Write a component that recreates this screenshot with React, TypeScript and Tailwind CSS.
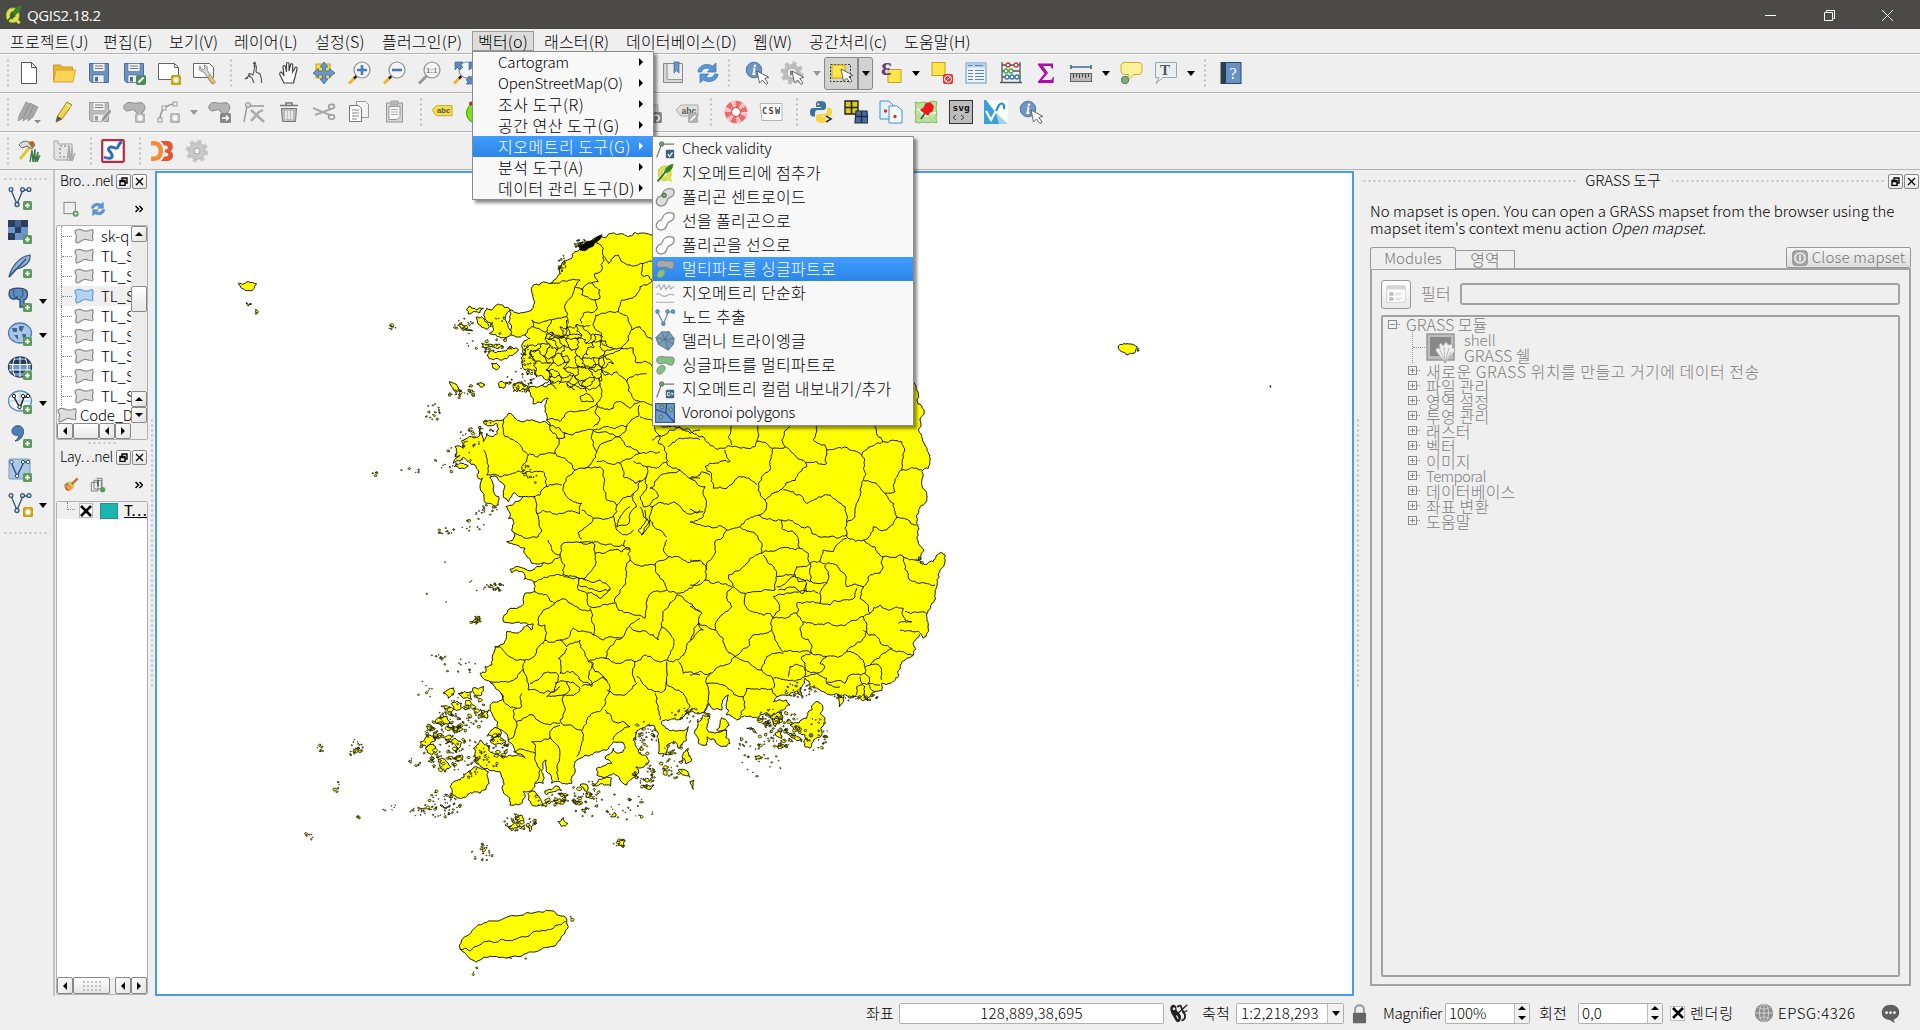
import React from "react";

type Pt = [number, number];
type Kids = { children?: React.ReactNode };

/* ---------- map geometry ---------- */
let seed = 7;
const rnd = () => {
  seed = (seed * 1103515245 + 12345) & 0x7fffffff;
  return seed / 0x7fffffff;
};
// Tiles are digitised at three units per screen pixel, relative to a tile origin.
const A: Pt = [400, 220];
const B: Pt = [400, 540];
const C: Pt = [690, 420];
const J: Pt = [440, 860];
const pts = (o: Pt, s: string): Pt[] =>
  s.trim().split(/\s+/).map((p) => {
    const [x, y] = p.split(",").map(Number);
    return [o[0] + x / 3, o[1] + y / 3] as Pt;
  });
const rough = (p: Pt[], amp: number): Pt[] => {
  const split = (a: Pt, b: Pt, out: Pt[]) => {
    const dx = b[0] - a[0];
    const dy = b[1] - a[1];
    const len = Math.hypot(dx, dy);
    if (len < 2.6) {
      out.push(b);
      return;
    }
    const k = (rnd() - 0.5) * amp;
    const m: Pt = [(a[0] + b[0]) / 2 - dy * k, (a[1] + b[1]) / 2 + dx * k];
    split(a, m, out);
    split(m, b, out);
  };
  const out: Pt[] = [p[0]];
  for (let i = 1; i < p.length; i++) split(p[i - 1], p[i], out);
  return out;
};
const d = (p: Pt[], close = false) =>
  "M" + p.map((q) => q[0].toFixed(1) + " " + q[1].toFixed(1)).join("L") + (close ? "Z" : "");

const coast: Pt[] = [
  ...pts(A, "757,45 725,40 690,47 660,42 640,38 600,50 575,62 545,85 525,95 515,115 490,125 475,145 480,160 462,180 450,190 430,185 400,195 395,215 400,235 395,270 370,278 330,270 335,345 345,348 375,345 390,355 365,375 370,400 365,430 375,450 405,450 405,465 440,480 460,485 440,500 390,500 385,512 400,535 400,552 445,535 435,575 440,600 450,610 450,630 470,655 495,652 495,638 480,625 440,608 380,600 345,595 325,580 310,600 280,605 250,605 270,617 290,610 295,625 280,650 260,640 250,665 240,640 240,618 235,650 215,650 190,660 190,685 165,680 165,710 180,705 160,730 190,712 205,725 225,735 235,775 248,775 250,820 262,850 295,855 280,810 270,770 285,768 300,785 315,800 315,835 325,845 345,818 370,830 345,845 318,860 330,880 325,895 340,900 335,930 345,948"),
  ...pts(B, "320,5 350,15 375,25 380,50 395,70 430,68 425,78 370,85 330,88 335,98 370,97 372,118 400,125 405,155 375,160 370,185 345,205 310,230 310,245 340,250 400,252 395,270 385,258 370,262 365,272 320,275 300,315 285,320 278,345 275,375 255,380 258,395 240,400 250,415 270,425 300,455 310,470 275,490 270,510 280,530 290,565 325,605 345,635 375,655 330,645 310,655 280,640 262,615 240,600 220,625 225,665 250,685 300,695 310,720 310,755 325,770 330,795 365,790 370,755 400,745 405,730 430,730 438,660 445,700 455,730 480,725 515,730 525,690 530,660 555,645 600,635 640,605 670,608 675,625 655,640 640,625 632,640 615,655 635,670 590,685 590,705 640,700 660,720 680,735 715,700 710,680 748,665 740,650 715,635 700,600 710,575 760,555 775,580 775,640 800,645 800,615 830,610 835,625 860,600 865,560 820,570 785,545 800,540 830,540 860,515 895,522"),
  ...pts(C, "25,882 55,850 65,865 80,865 95,870 98,840 115,825 110,885 140,900 205,895 225,880 260,885 275,870 300,855 290,840 250,845 260,830 300,820 340,830 335,800 345,775 360,800 390,810 420,825 440,820 448,860 460,825 480,835 510,835 520,842 540,830 555,815 575,812 575,790 600,790 625,770 630,735 645,720 670,705 672,665 680,655 692,640 700,655 710,640 715,615 710,600 712,580 725,550 735,520 742,490 750,450 765,425 765,405 755,397 730,425 710,433 685,418 702,390 685,370 685,345 680,310 680,285 700,255 708,215 695,180 695,155 715,145 720,105 705,75 695,50 690,0 702,-20 680,-60"),
  [880, 330], [850, 280], [800, 250], [700, 240],
];

const bordersA = `600,50 590,70 610,85 612,120 605,150 585,160 595,185 565,190 545,210 525,200 540,180 500,185 470,190 450,190
612,110 625,130 655,105 665,125 690,135 725,130 757,125
725,130 725,165 757,180
757,180 720,200 690,235 665,240 655,275 685,295 695,330 685,360 665,385
525,200 515,230 500,245 500,290
395,300 430,305 470,295 500,290 505,310
575,190 600,210 600,235 580,240 545,225 545,205
585,240 590,270 550,280 540,300 545,310
585,285 620,278 655,275
500,300 485,355 440,335 400,320 395,300
400,320 375,345
440,335 455,300
695,330 720,320 740,350 757,360
590,285 580,310 605,340 610,375 665,385 700,385 705,425 730,425 757,440
665,385 640,400 610,405 605,450 635,465 650,455 680,485 740,460
680,485 685,510 700,535 720,545 757,555
605,465 600,500 605,530 590,550 585,575 600,600 580,620
590,560 640,565 650,545 690,565 720,545
450,490 500,485 540,505 570,510 600,490
540,530 560,520 580,545 545,545 540,530
440,600 480,605 505,575 560,570 590,550
495,640 540,635 580,630 640,625 680,620
720,555 715,590 680,620 655,650
580,630 580,680 590,695 550,745 525,750 500,720 465,700 475,655
655,650 620,665 590,695
580,630 655,650 680,680 720,700 780,695
720,590 757,600 780,650 775,670 800,700 805,725
310,600 315,650 355,670 385,705 440,700 465,700
250,690 262,730 260,765 305,770
385,705 365,740 370,755 305,770
365,760 430,755 440,800 485,795
525,750 490,795 500,830 545,850 540,880 470,885 430,870 410,880 400,830
370,830 400,830 420,825 440,800
550,745 600,740 610,750 610,800 620,840 650,855 690,830 700,820 720,780
590,725 660,730 700,710 720,700
660,730 670,770 705,790 740,765 740,740 700,725
740,770 720,830 730,860 750,855 775,830 750,805 770,780 800,760 840,750 800,725 740,740
545,870 580,895 640,890 650,855
580,895 535,940 545,957
690,860 655,900 650,920 680,915 690,880 710,860 700,820
720,860 740,900 715,930 725,945 745,910 735,870
750,860 820,845 860,880 900,870
750,900 780,930 800,950
805,680 860,655 900,660
840,750 870,775 900,775
640,890 650,930 680,945 700,930
410,880 425,930 415,950 345,940
757,600 800,620 870,640 900,630
757,860 750,900 725,945`;
const bordersB = `445,0 455,30 480,45 485,15 540,8 585,15 585,45 580,85 555,115 490,105 495,75 480,45
480,50 430,68
540,5 600,10 665,15 690,25 690,60
585,40 640,30 690,25
675,0 672,18
690,60 680,110 660,150 645,175 655,210 690,220 735,235
800,0 790,30 805,50 765,75 735,75 690,60
805,50 850,60 900,60
765,75 770,100 795,130 800,150 830,160 900,120
490,105 400,125
490,110 540,115 535,150 560,160 570,200 600,200 645,190
545,115 600,120 630,150 600,175 590,165 560,160
535,135 565,145 600,155 630,150
405,155 440,165 465,190 430,210 415,235 415,255 435,255 435,300
465,190 500,180 530,200 570,210
570,205 575,245 580,285 610,300 670,290 680,270 690,255 720,235
435,300 480,300 510,285 520,265 580,285
735,235 740,205 760,155 800,150
830,165 805,200 785,260 775,300 740,275 690,260
830,165 900,215
785,260 815,290 820,320 800,360 735,345 705,365 615,355 670,290
800,360 835,360 860,325 875,290 900,250
835,365 850,400 900,405
480,300 500,320 540,300 555,340 565,365 615,355
500,325 475,355 480,400 520,395 540,420 575,440 565,410 580,370 565,365
435,300 430,310 375,360 345,360 300,320 285,320
375,360 370,390 350,415 270,425
370,390 385,430 385,450 430,460 465,455
390,430 430,400 470,400 475,420 465,455
465,430 500,425 540,445 530,460 490,465 440,470 480,440
500,425 510,450 490,465
545,440 570,435 610,410 620,420 615,480 605,510 575,520 560,550 545,570 490,555 480,540 490,490 490,465
575,370 585,395 620,420
705,365 700,410 710,430 675,465 620,450
800,365 800,420 795,450 765,455 710,410
800,425 850,460 870,500 855,525
765,460 775,500 780,540
365,460 365,500 340,510 350,550 325,600
305,460 315,490 350,505
350,545 400,525 420,545 480,550
480,555 450,575 450,595 395,605 405,640 340,635
405,640 405,730
450,590 480,640 475,720
545,570 545,610 530,650
615,510 640,545 690,560 640,600`;
const bordersC = `-114,60 -60,30 0,30 40,50 95,85 140,80 195,80 200,65 250,85 285,80 275,60 300,20
125,10 115,50 125,75
200,10 200,65
105,90 120,125 60,130 45,140 65,160 70,205 110,205 145,170 200,195
250,85 240,150 215,180 205,210 225,240 270,210 350,140 345,125 310,100 285,80
385,10 370,60 405,75 410,130 345,130
410,90 480,90 515,105 580,65 555,20 550,0
515,105 520,180 505,240 495,290 470,305 465,260 420,225 350,250 310,215 280,210
580,65 635,65 640,110 635,150 695,150
635,150 615,180 615,215 585,220 520,180
585,220 620,290 680,315
620,290 590,330 550,320 520,360 475,355 470,345
470,305 465,325 470,345 420,350 365,340 355,320 275,300 205,285 150,320
225,240 230,260 205,285
0,175 45,200 40,290 0,305
0,175 35,155 60,165
0,268 40,275
0,305 60,320 110,330 150,320 180,335 215,370 215,400
110,330 80,360 75,400 50,430 45,480 125,500
0,420 35,425 50,450
0,495 45,480
215,400 180,415 160,440 115,465 130,500
220,405 235,430 260,460 255,510 200,515 165,520 130,500
275,300 275,325 325,360 330,385 215,400
330,385 355,400 360,430 320,440 315,465 260,470
360,430 390,425 400,390 430,395 470,355
520,360 580,410 570,460 535,470 520,500 470,500 455,455 390,425
580,410 635,405 685,420
640,410 660,480 690,490 735,495
520,500 510,535 540,580
360,430 360,480 410,490 405,435
260,500 300,475 350,490 340,520 300,500 265,510
315,465 325,485 350,480 365,485
410,490 390,520 390,550 420,555 495,530 500,505
350,515 385,520
350,490 350,515 300,520 250,530 270,570 250,590 245,630 190,645 175,680 135,710
165,520 175,570 240,580 250,595
130,500 110,520 125,560 90,590 75,630 105,680 135,710
0,560 35,580 25,610 75,630
0,660 40,630 25,610
250,595 320,580 340,610 335,650 365,675 365,700 280,695 255,660 245,630
320,580 320,550 350,545 390,550
340,605 420,610 520,590 540,580 570,555 640,565 645,600
645,575 710,580
520,590 530,630 470,695 410,710 365,700
520,630 560,650 605,685 640,695 670,705
470,695 525,740 580,700 605,685
135,710 60,760 0,765
60,760 50,790 110,800 160,830 170,805 245,805
135,710 190,740 215,750 245,770 250,805
215,750 230,710 280,700
250,775 320,780 345,770 340,740 300,740 295,770
365,700 335,710 345,750 380,760 405,740 390,730 410,710
345,770 380,760 410,775 410,790 465,790 480,765 525,760 525,740
410,790 450,800
525,760 540,800 555,815
540,735 570,740 575,780
495,830 500,800 540,790 570,795
510,770 525,800 520,835
625,610 665,605
630,632 690,638
645,600 665,605
50,790 55,830 40,880
160,830 150,890
245,805 260,830`;
const isles: [Pt, string][] = [
  [A, "260,265 295,252 330,270 335,345 300,352 268,340 280,325 275,310 258,300"],
  [A, "200,270 210,258 250,264 240,278 205,282"],
  [A, "228,292 245,290 268,320 262,328 235,312"],
  [A, "262,405 300,395 330,378 355,388 345,400 310,418 280,420"],
  [A, "295,490 320,488 312,505 298,503"],
  [A, "148,485 168,492 185,512 160,510"],
  [A, "340,492 372,495 390,512 350,515"],
  [A, "275,430 300,440 290,450"],
  [A, "245,370 280,377 310,380 250,382"],
  [A, "162,740 190,730 205,738 180,746"],
  [A, "175,315 195,318 218,332 205,330"],
  [A, "230,492 255,495 240,500"],
  [B, "150,740 180,720 225,680 265,695 268,730 240,760 185,775 155,765"],
  [B, "383,762 405,755 420,775 438,800 405,798 385,780"],
  [B, "435,752 470,738 485,752 440,765"],
  [B, "476,760 505,765 495,775"],
  [B, "460,780 490,785 470,792"],
  [B, "130,460 160,443 160,465 145,475"],
  [B, "175,460 215,455 215,478 190,475"],
  [B, "218,445 250,438 245,465 225,472"],
  [B, "155,490 185,490 178,510 160,508"],
  [B, "240,508 268,510 262,535 248,530"],
  [B, "105,548 140,528 150,550 125,560"],
  [B, "145,562 172,560 165,580"],
  [B, "62,605 100,588 108,600 85,618 65,622"],
  [B, "75,625 100,612 108,630 95,645"],
  [B, "140,610 165,595 185,608 175,625"],
  [B, "115,658 135,658 152,680 135,697 120,680"],
  [B, "160,655 185,645 188,660"],
  [B, "265,585 285,562 305,580 285,592"],
  [B, "270,600 300,590 318,605 290,612"],
  [B, "582,735 595,720 635,715 632,738"],
  [B, "474,845 490,833 503,850 485,860"],
  [B, "325,860 350,848 355,860 335,872"],
  [B, "345,830 365,825 372,842 355,845"],
  [B, "378,855 395,860 390,875"],
  [B, "730,735 762,735 752,748"],
  [B, "845,650 865,625 875,660 858,672"],
  [B, "835,690 865,700 870,712 848,705"],
  [B, "870,725 882,720 880,748"],
  [B, "520,788 535,782 540,792"],
  [B, "540,735 562,735 560,755"],
  [B, "632,830 645,818 648,828"],
  [B, "120,795 150,800 135,805"],
  [B, "655,900 675,900 672,918 660,916"],
  [B, "215,250 240,230 240,242"],
  [C, "300,915 350,895 365,870 385,845 397,855 390,880 405,910 395,945 370,965 360,985 345,980 345,945 310,935"],
  [C, "15,930 40,885 60,890 52,930 75,940 110,930 120,970 95,980 75,960 52,950 50,975 25,965"],
  [C, "80,930 95,893 118,915 105,930"],
  [C, "240,890 275,875 275,905 250,912"],
  [C, "255,940 278,930 275,955"],
  [C, "170,925 190,925 200,940"],
  [C, "195,1008 218,1012 198,1020"],
  [C, "288,935 310,945 335,965 310,955"],
  [A, "-485,190 -455,185 -430,192 -440,207 -475,205"],
  [A, "-462,248 -445,252 -455,258"],
  [A, "2155,378 2190,372 2212,380 2205,398 2180,405 2160,392"],
  [J, "58,258 65,240 85,225 100,208 130,190 165,183 200,172 230,168 260,158 290,156 320,151 340,153 352,165 372,168 380,178 380,188 385,200 370,225 360,240 345,258 320,262 300,270 265,277 240,290 215,290 190,292 150,288 130,292 108,307 85,290 62,270"],
];
// cx, cy, rx, ry, count, largest radius (screen pixels)
const clusters: [number, number, number, number, number, number][] = [
  [463, 712, 24, 22, 75, 3.2], [442, 745, 22, 25, 95, 3.2], [440, 805, 22, 14, 55, 1.6],
  [495, 750, 16, 18, 44, 2.0], [520, 822, 16, 9, 32, 2.8], [585, 795, 14, 16, 40, 2.6],
  [470, 760, 18, 20, 40, 1.6], [555, 800, 22, 8, 26, 2.4], [645, 738, 12, 17, 45, 1.9],
  [645, 775, 12, 12, 34, 2.4], [675, 760, 15, 18, 42, 2.4], [785, 730, 20, 18, 60, 2.2],
  [815, 735, 14, 18, 30, 1.6], [800, 690, 16, 8, 34, 1.6], [770, 718, 12, 10, 40, 2.0],
  [755, 745, 20, 18, 24, 1.6], [690, 715, 20, 8, 30, 1.4], [855, 697, 24, 4, 30, 1.3],
  [615, 808, 42, 14, 34, 1.3], [482, 853, 11, 9, 22, 1.4], [621, 843, 8, 4, 9, 2.2],
  [433, 412, 8, 9, 15, 1.5], [463, 391, 17, 7, 20, 1.5], [520, 380, 14, 12, 40, 1.5],
  [490, 345, 24, 8, 26, 1.5], [465, 326, 14, 8, 18, 1.6], [472, 436, 12, 14, 22, 1.4],
  [455, 460, 20, 14, 18, 1.4], [485, 510, 12, 8, 14, 1.8], [445, 531, 10, 4, 14, 1.4],
  [470, 525, 14, 10, 10, 1.3], [495, 588, 12, 5, 22, 1.5], [476, 620, 6, 5, 12, 2.0],
  [438, 657, 7, 4, 9, 1.6], [460, 665, 18, 9, 12, 1.3], [425, 690, 8, 10, 8, 1.4],
  [415, 762, 7, 4, 8, 1.6], [418, 812, 8, 5, 10, 1.6], [321, 748, 4, 4, 7, 2],
  [354, 747, 9, 9, 22, 1.9], [337, 787, 3, 6, 6, 1.4], [360, 817, 3, 3, 4, 1.4],
  [309, 836, 4, 4, 6, 2.2], [390, 808, 12, 8, 6, 0.8], [393, 328, 4, 4, 6, 1.6],
  [376, 474, 4, 2, 5, 1.2], [410, 470, 14, 4, 5, 1], [582, 244, 8, 5, 40, 1.2],
  [562, 265, 4, 10, 20, 1], [527, 355, 8, 10, 24, 1.5], [530, 475, 8, 12, 14, 1.2],
  [450, 583, 30, 25, 6, 1], [920, 560, 4, 3, 8, 1.3],
  [1270, 387, 1, 1, 2, 0.8], [475, 968, 3, 8, 3, 0.8], [572, 918, 2, 2, 2, 2],
  [257, 311, 3, 3, 3, 1.1], [760, 765, 30, 12, 12, 1.2], [515, 958, 14, 1, 4, 0.8],
  [1137, 350, 2, 4, 4, 0.8], [486, 428, 8, 8, 12, 1], [497, 325, 10, 12, 10, 1.2],
];

const buildMap = () => {
  seed = 7;
  const land = d(rough(coast, 0.42), true);
  const borders = ([[A, bordersA], [B, bordersB], [C, bordersC]] as [Pt, string][])
    .map(([o, s]) => s.split("\n").map((l) => d(rough(pts(o, l), 0.36))).join(""))
    .join("");
  const jeju = d(rough(pts(J, "62,268 78,265 92,272 105,260 130,247 175,246 180,239 240,232 290,213 315,212 345,197 377,185"), 0.3));
  const islands = isles.map(([o, s]) => {
    const p = pts(o, s);
    return d(rough([...p, p[0]], o === J ? 0.25 : 0.45), true);
  }).join("");
  // dense metropolitan districts
  const cols = 10;
  const rows = 9;
  const g: Pt[][] = [];
  for (let r = 0; r <= rows; r++) {
    g.push([]);
    for (let c = 0; c <= cols; c++) {
      g[r].push([526 + c * 8.2 + (rnd() - 0.5) * 7.5 + (r % 2) * 4, 324 + r * 7.2 + (rnd() - 0.5) * 7 + c * 0.5]);
    }
  }
  let metro = "";
  const inside = (p: Pt) => Math.hypot((p[0] - 567) / 41, (p[1] - 355) / 33) < 1;
  for (let r = 0; r <= rows; r++) {
    for (let c = 0; c <= cols; c++) {
      const p = g[r][c];
      if (!inside(p)) continue;
      if (c < cols && rnd() > 0.2) metro += d(rough([p, g[r][c + 1]], 0.6));
      if (r < rows && rnd() > 0.15) metro += d(rough([p, g[r + 1][c]], 0.6));
    }
  }
  let specks = "";
  clusters.forEach(([cx, cy, rx, ry, n, s]) => {
    for (let i = 0; i < n; i++) {
      const t = rnd() * Math.PI * 2;
      const q = Math.sqrt(rnd());
      const x = cx + Math.cos(t) * q * rx;
      const y = cy + Math.sin(t) * q * ry;
      const rr = 0.35 + rnd() * rnd() * s;
      const p: Pt[] = [];
      for (let k = 0; k < 6; k++) {
        const a = (k / 6) * Math.PI * 2;
        const e = rr * (0.5 + rnd() * 0.8);
        p.push([x + Math.cos(a) * e * 1.25, y + Math.sin(a) * e]);
      }
      specks += d(p, true);
    }
  });
  const dmz = d(pts(A, "606,44 592,50 582,60 562,66 552,72 538,76 540,90 556,92 566,84 580,78 584,68 600,58"), true);
  return { land, borders, jeju, islands, metro, specks, dmz };
};
const MAP = buildMap();

const MapCanvas = () => (
  <svg className="block h-full w-full" viewBox="157 173 1195 821" preserveAspectRatio="none">
    <g fill="#ffff00" stroke="#141405" strokeWidth="1" strokeLinejoin="round">
      <path d={MAP.land} />
      <path d={MAP.islands} />
      <path d={MAP.specks} strokeWidth="0.8" />
      <path d={MAP.dmz} fill="#000" />
      <path d={MAP.borders} fill="none" />
      <path d={MAP.metro} fill="none" />
      <path d={MAP.jeju} fill="none" />
    </g>
  </svg>
);

/* ---------- icons ---------- */
const Ic = ({ children, s = "h-6 w-6" }: Kids & { s?: string }) => (
  <svg className={s + " shrink-0"} viewBox="0 0 24 24" fill="none">{children}</svg>
);
const Plus = ({ x = 15, y = 15 }) => (
  <g>
    <rect x={x} y={y} width="9" height="9" rx="1.5" fill="#5b9a5b" />
    <path d={`M${x + 4.5} ${y + 2}v5M${x + 2} ${y + 4.5}h5`} stroke="#fff" strokeWidth="1.7" />
  </g>
);
const Star = ({ x = 14, y = 14, c = "#c8a20c" }) => (
  <g>
    <rect x={x} y={y} width="10" height="10" rx="1.5" fill={c} />
    <path d={`M${x + 5} ${y + 1.5}v7M${x + 1.5} ${y + 5}h7M${x + 2.5} ${y + 2.5}l5 5M${x + 7.5} ${y + 2.5}l-5 5`} stroke="#fff" strokeWidth="1.1" />
  </g>
);
const Floppy = ({ c = "#6b93c7", o = "#4a6c96" }) => (
  <g>
    <path d="M2.5 2.5h19v19h-17l-2-2z" fill={c} stroke={o} />
    <rect x="6" y="2.500" width="12" height="8" fill="#f4f4f4" stroke={o} strokeWidth=".6" />
    <path d="M8 5h8M8 7.500h8" stroke="#777" />
    <rect x="6" y="14" width="11" height="7.500" fill="#eee" stroke={o} strokeWidth=".6" />
    <rect x="8" y="16" width="3" height="4.500" fill={o} />
  </g>
);
const Lens = ({ gray = false, children }: Kids & { gray?: boolean }) => (
  <g>
    <path d="M2 22.500l6-6" stroke={gray ? "#999" : "#f0b41c"} strokeWidth="3" />
    <path d="M7 17.500l2.500-2.500" stroke={gray ? "#999" : "#222"} strokeWidth="2.500" />
    <circle cx="15" cy="9" r="8" fill="#f2f4f6" stroke="#8a8f94" strokeWidth="1.200" />
    {children}
  </g>
);
const Cursor = ({ x = 0, y = 0 }) => (
  <path d={`M${x + 12} ${y + 10}l2.500 12 3-3 3.500 4.500 2-1.500-3.200-4.500 4-1.200z`} fill="#fff" stroke="#555" strokeWidth=".9" />
);
const Refresh = () => (
  <g fill="#5a96d6" stroke="#3e74b4" strokeWidth=".7">
    <path d="M2 11c0-6 8-10 14.500-6L20 2v9h-8.500L14 8C10.500 6 6 8 5.500 11z" />
    <path d="M22 13c0 6-8 10-14.500 6L4 22v-9h8.500L10 16c3.500 2 8 0 8.500-3z" />
  </g>
);
const Gear = ({ c = "#c9c9c9", r = 3 }) => (
  <g>
    <circle cx="12" cy="12" r="9.500" stroke={c} strokeWidth="4" strokeDasharray="4 3.460" />
    <circle cx="12" cy="12" r="8.500" fill={c} stroke="#aaa" strokeWidth=".6" />
    <circle cx="12" cy="12" r={r} fill="#efefef" stroke="#a5a5a5" />
  </g>
);
const Poly = ({ c = "#b4b4b4", o = "#888" }) => (
  <path d="M2 6c2-4 5-4 9-3s6-1 9 0 4 6 1 9-6 2-8-1-6 0-8 0-4-3-3-5z" fill={c} stroke={o} />
);
const Info = () => (
  <g>
    <circle cx="9" cy="9" r="7.800" fill="#6f95c5" stroke="#4f76a8" />
    <path d="M9.800 7.500L8.300 13h2M8.300 7.500h1.500" stroke="#fff" strokeWidth="1.800" />
    <circle cx="10" cy="4.800" r="1.200" fill="#fff" />
    <Cursor />
  </g>
);
const VNodes = ({ c = "#34567c" }) => (
  <g stroke={c} strokeWidth="1.300" fill="#dbe6f0">
    <path d="M3 4l6 14 6-14h5" fill="none" />
    <circle cx="3" cy="3.500" r="1.900" /><circle cx="14.500" cy="3.500" r="1.900" /><circle cx="21" cy="3.500" r="1.900" /><circle cx="9" cy="18.500" r="2" />
  </g>
);
const Abc = ({ c = "#f5df4d", o = "#c9a51a" }) => (
  <g>
    <path d="M1 10l5-5h17v11H6z" fill={c} stroke={o} />
    <text x="6.500" y="13.500" fontSize="8.500" fontWeight="700" fill="#555" fontFamily="Liberation Sans">abc</text>
  </g>
);
const QLogo = ({ s }: { s?: string }) => (
  <Ic s={s}>
    <path d="M12 3.500c-5.500 0-8 4-8 9s2.500 8.500 7.500 8.500 8-3.500 8-8.500-2.500-9-7.500-9zm0 4c2.500 0 3.200 2 3.200 4.500s-1.200 5-3.700 5-3.200-2-3.200-4.500S9.500 7.500 12 7.500z" fill="#dbe34e" stroke="#a8b82c" strokeWidth=".8" fillRule="evenodd" />
    <path d="M3 22C8 17 12 11 18 4" stroke="#2b6a1a" strokeWidth="2" />
    <path d="M11 11c1-5 5-9 11-10 0 4-2 9-8 11z" fill="#37851f" />
    <path d="M13 15l7 7" stroke="#dbe34e" strokeWidth="3.500" />
  </Ic>
);
const Arr = ({ c = "border-t-black" }) => (
  <span className={"block h-0 w-0 shrink-0 border-x-[4.5px] border-t-[5px] border-x-transparent " + c} />
);
const Slot = ({ children }: Kids) => <span className="flex w-[35px] shrink-0 items-center justify-center">{children}</span>;
const ASlot = ({ gray }: { gray?: boolean }) => (
  <span className="flex w-[15px] shrink-0 justify-center"><Arr c={gray ? "border-t-[#999]" : "border-t-black"} /></span>
);
const dotsV = "bg-[radial-gradient(circle,#bdbdbd_1px,transparent_1.2px)] bg-[length:4px_5px]";
const HandleV = ({ w = "w-[11px]" }) => (
  <span className={w + " flex shrink-0 justify-center"}><span className={"h-[30px] w-[5px] " + dotsV} /></span>
);
const DotsH = ({ c = "flex-1" }) => <span className={c + " h-[5px] bg-[radial-gradient(circle,#c2c2c2_1px,transparent_1.2px)] bg-[length:5px_4px]"} />;

const Bar = ({ h = "h-[39px]", children }: Kids & { h?: string }) => (
  <div className={h + " flex shrink-0 items-center border-b border-[#b4b4b4] shadow-[inset_0_1px_0_#fafafa]"}>{children}</div>
);

const Row1 = () => (
  <Bar>
    <HandleV w="w-[11px] pl-[5px]" />
    <Slot><Ic><path d="M4.500 1.500h10l5 5v16h-15zM14.500 1.500v5h5" fill="#fff" stroke="#555" /></Ic></Slot>
    <Slot><Ic><path d="M1.500 21V4h7l2 2h10v4" fill="#e8b535" stroke="#c99626" /><path d="M1.500 21L4 9h19.500L21 21z" fill="#fbd355" stroke="#d9a52e" /></Ic></Slot>
    <Slot><Ic><Floppy /></Ic></Slot>
    <Slot><Ic><Floppy /><rect x="14" y="14" width="10" height="10" rx="2" fill="#4c8a57" /><path d="M16.500 21.500l5-5" stroke="#fff" strokeWidth="2" /></Ic></Slot>
    <Slot><Ic><path d="M1.500 2.500h16l4 4v12h-20z" fill="#fff" stroke="#666" /><path d="M17.500 2.500v4h4" stroke="#666" /><Star /></Ic></Slot>
    <Slot><Ic><path d="M1.500 2.500h16l4 4v10h-20z" fill="#fff" stroke="#666" /><path d="M8 5c-2 3 0 6 4 6l8 12 3-2-8-12c1-3-1-5-3-5l1 3-2 2-2-1z" fill="#d8d8d8" stroke="#777" strokeWidth=".8" /><path d="M16 15.500l5.500 7.500 2-1.500-5-7.500z" fill="#e6cf72" stroke="#a08b3a" strokeWidth=".7" /></Ic></Slot>
    <HandleV w="w-[15px] pl-[6px]" />
    <Slot><Ic><path d="M8 14l-5 4M3 18l3-1M12 22l-2-5-3-2c-1-2 0-3 2-2l2 1 2-9 1.500.5-.5 5.500 4 2 1.500 5v4M12 6l1-5M13 1l-2 2M13 1l1 3" stroke="#555" strokeWidth="1.100" /></Ic></Slot>
    <Slot><Ic><path d="M7 22l-4-8c-1-3 1-4 3-1l1 2-1-9c0-2 2-2 2.500 0l1 5V3c0-2 2.500-2 2.500 0v7l1.500-6c.5-2 2.500-1.500 2.200.5L15.500 11l2.500-4c1-1.500 2.500-.500 2 1l-2 8-1.500 6z" fill="#fff" stroke="#444" strokeWidth="1.200" /></Ic></Slot>
    <Slot><Ic><rect x="4" y="3" width="14" height="14" fill="#f6de3c" stroke="#c4a21b" /><path d="M12 1l4 5h-2.500v4h4V7.500L23 12l-5.500 4.500V14h-4v4H16l-4 5-4-5h2.500v-4h-4v2.500L1 12l5.500-4.500V10h4V6H8z" fill="#6b96c8" stroke="#3f6a9c" strokeWidth=".8" /></Ic></Slot>
    <Slot><Ic><Lens><path d="M15 4v10M10 9h10" stroke="#4a7ab5" strokeWidth="2.600" /></Lens></Ic></Slot>
    <Slot><Ic><Lens><path d="M10 9h10" stroke="#4a7ab5" strokeWidth="2.600" /></Lens></Ic></Slot>
    <Slot><Ic><Lens gray><text x="9" y="12" fontSize="8" fontWeight="700" fill="#888" fontFamily="Liberation Sans">1:1</text></Lens></Ic></Slot>
    <Slot><Ic><Lens /><path d="M3 1h8L8.500 3.500 11 6 8 9 5.500 6.500 3 9zM23 1h-6v8l3-2 3 2zM23 23v-8l-3 2-3-2-3 4 2 2-2 2z" fill="#5b88bd" stroke="#3f6a9c" strokeWidth=".7" /></Ic></Slot>
    <span className="w-[174px] shrink-0" />
    <Slot><Ic><path d="M2.500 2.500h19v19h-19z" fill="#d8d8d8" stroke="#8a8a8a" /><path d="M6 2.500v16h15.500" stroke="#999" /><rect x="7" y="3" width="14" height="15" fill="#ececec" /><path d="M13 1v11l2.500-2.500L18 12V1z" fill="#6f95c5" stroke="#41699b" strokeWidth=".7" /></Ic></Slot>
    <Slot><Ic><Refresh /></Ic></Slot>
    <HandleV w="w-[14px] pr-[6px]" />
    <Slot><Ic><Info /></Ic></Slot>
    <Slot><Ic><Gear c="#c0c0c0" r={5} /><path d="M10 9l5 3-5 3z" fill="#888" /><Cursor /></Ic></Slot>
    <ASlot gray />
    <span className="flex h-[33px] w-[34px] shrink-0 items-center justify-center rounded-l-[3px] border border-[#888] bg-[#d2d2d2]"><Ic><rect x="1.500" y="3.500" width="20" height="17" stroke="#333" strokeDasharray="2 1.500" /><rect x="3" y="4" width="13" height="13" fill="#ffe54c" stroke="#c4a21b" /><Cursor y={-2} /></Ic></span>
    <span className="flex h-[33px] w-[15px] shrink-0 items-center justify-center rounded-r-[3px] border border-[#888] bg-[#d2d2d2]"><Arr /></span>
    <Slot><Ic><rect x="9" y="8.500" width="13" height="13" fill="#ffe54c" stroke="#c4a21b" /><text x="2" y="14" fontSize="25" fontWeight="700" fill="#6a3e7c" fontFamily="Liberation Serif">ε</text></Ic></Slot>
    <ASlot />
    <Slot><Ic><rect x="3" y="1.500" width="13" height="13" fill="#ffe54c" stroke="#c4a21b" /><rect x="14" y="13" width="10" height="10" rx="2" fill="#d33" /><circle cx="19" cy="18" r="3.500" stroke="#fff" /><path d="M16.500 20.500l5-5" stroke="#fff" /></Ic></Slot>
    <Slot><Ic><rect x="2" y="2" width="20" height="20" fill="#eef4fb" stroke="#6b93c7" /><rect x="2.500" y="2.500" width="19" height="4" fill="#b7d0ec" /><path d="M4 9.500h5M11 9.500h9M4 12.500h5M11 12.500h9M4 15.500h5M11 15.500h9M4 18.500h5M11 18.500h9M4 4.500h4M11 4.500h8" stroke="#5b84b8" strokeWidth="1.200" /></Ic></Slot>
    <Slot><Ic><path d="M3 1v20M21 1v20M3 4h18M3 10h18M3 16h18M1 21.500h22" stroke="#555" strokeWidth="1.300" /><g fill="#fff" strokeWidth="1.300"><g stroke="#c33"><circle cx="9" cy="4" r="2" /><circle cx="17" cy="4" r="2" /></g><g stroke="#4a4"><circle cx="7" cy="10" r="2" /><circle cx="12" cy="10" r="2" /></g><g stroke="#37a"><circle cx="8" cy="16" r="2" /><circle cx="13" cy="16" r="2" /><circle cx="18" cy="16" r="2" /></g></g></Ic></Slot>
    <Slot><Ic><path d="M4 2.500h15v5h-1.500c0-1.500-.5-2.500-2-2.500H9l5 7-6 7h8c2 0 2.500-1 3-3h1l-.5 6H4v-1.500l6.500-8L4 4z" fill="#b00aa8" /></Ic></Slot>
    <Slot><Ic><path d="M2 6h20M2 4v4M22 4v4" stroke="#3d6ea5" strokeWidth="1.700" /><rect x="1.500" y="12.500" width="21" height="8" fill="#b9b9b9" stroke="#666" /><path d="M4.500 13v4M7.500 13v3M10.500 13v4M13.500 13v3M16.500 13v4M19.500 13v3" stroke="#444" /></Ic></Slot>
    <ASlot />
    <Slot><Ic><path d="M6 1.500h13c3 0 4 1.500 4 4v4c0 3-1.500 4-4 4h-4L8 20l1.500-6.500H6c-3 0-4-1.500-4-4v-4c0-2.500 1-4 4-4z" fill="#fdf19a" stroke="#c9a92e" /><circle cx="6" cy="19" r="3.700" fill="#79b07a" stroke="#5a7a5a" /></Ic></Slot>
    <Slot><Ic><path d="M1.500 1.500h21v15H9l-7 6 3-6H1.500z" fill="#e9f0f3" stroke="#9aa5aa" /><text x="6" y="14" fontSize="15" fontWeight="700" fill="#555" fontFamily="Liberation Serif">T</text></Ic></Slot>
    <ASlot />
    <HandleV w="w-[14px]" />
    <span className="ml-px" />
    <Slot><Ic><rect x="2" y="1.500" width="20" height="21" fill="#6791c6" stroke="#2e4561" /><rect x="2" y="1.500" width="5" height="21" fill="#2c3d52" /><text x="10.500" y="18" fontSize="16" fill="#fff" fontFamily="Liberation Serif">?</text></Ic></Slot>
  </Bar>
);

const Row2 = () => (
  <Bar>
    <HandleV w="w-[11px] pl-[5px]" />
    <Slot><Ic><g fill="#a9a9a9" stroke="#8a8a8a" strokeWidth=".7"><path d="M1 21l1-5L9 2l4 2-7 14z" /><path d="M6 21l1-5 6-13 4 2-6 13z" /><path d="M11 21l1-5 5-11 4 2-5 10z" /></g><path d="M17 20h7l-3.500 3.500z" fill="#888" /></Ic></Slot>
    <Slot><Ic><path d="M4 22l1.500-6L15 2l5 3-10 14z" fill="#f0d84c" stroke="#9c8427" /><path d="M4 22l1.500-6 4.500 3z" fill="#555" /><path d="M14 4l5 3" stroke="#fff" /></Ic></Slot>
    <Slot><Ic><Floppy c="#bdbdbd" o="#999" /><path d="M13 23l2-5 7-9 3 2-7 9z" fill="#999" stroke="#eee" strokeWidth=".7" /></Ic></Slot>
    <Slot><Ic><Poly /><Star x={13} y={13} c="#b4b4b4" /></Ic></Slot>
    <Slot><Ic><path d="M3 20c0-9 4-14 13-16" stroke="#999" strokeWidth="1.500" /><rect x="1" y="18" width="4" height="4" fill="#eee" stroke="#999" /><rect x="5" y="6" width="4" height="4" fill="#eee" stroke="#999" /><rect x="16" y="2" width="4" height="4" fill="#eee" stroke="#999" /><Star x={13} y={13} c="#b4b4b4" /></Ic></Slot>
    <ASlot gray />
    <Slot><Ic><Poly /><rect x="13" y="13" width="11" height="10" rx="1.500" fill="#888" /><path d="M15 18h6M19 15.500l2.500 2.500-2.500 2.500" stroke="#fff" strokeWidth="1.500" /></Ic></Slot>
    <Slot><Ic><path d="M2 22l3-16h17" stroke="#999" strokeWidth="1.400" /><circle cx="6" cy="5" r="2.500" fill="#ddd" stroke="#888" /><path d="M9 10l13 12M9 21l8-9 4-2" stroke="#aaa" strokeWidth="2.500" /></Ic></Slot>
    <Slot><Ic><path d="M3 5.500h18M9 5V3h6v2" stroke="#777" strokeWidth="1.600" /><path d="M4.500 8.500h15l-1 13h-13z" fill="#bcbcbc" stroke="#777" /><path d="M9 11v8M12 11v8M15 11v8" stroke="#fff" strokeWidth="1.300" /></Ic></Slot>
    <Slot><Ic><path d="M1 8l17 7M3 15l16-6" stroke="#aaa" strokeWidth="2" /><ellipse cx="19.500" cy="6.500" rx="3" ry="2.300" stroke="#999" strokeWidth="1.500" /><ellipse cx="19.500" cy="17" rx="3" ry="2.300" stroke="#999" strokeWidth="1.500" /></Ic></Slot>
    <Slot><Ic><path d="M9.500 1.500h9l3 3v13h-12z" fill="#f3f3f3" stroke="#999" /><path d="M2.500 5.500h9l3 3v13h-12z" fill="#fff" stroke="#777" /><path d="M5 10h7M5 13h7M5 16h7M5 19h5" stroke="#888" /></Ic></Slot>
    <Slot><Ic><rect x="4.500" y="3" width="16" height="19" fill="#d3d3d3" stroke="#999" /><rect x="9" y="1" width="7" height="4" fill="#bbb" stroke="#999" strokeWidth=".8" /><path d="M7 6.500h11v10l-3 3H7z" fill="#fafafa" stroke="#999" /><path d="M9 9.500h7M9 12h7M9 14.500h7" stroke="#aaa" /></Ic></Slot>
    <HandleV w="w-[13px] pl-[8px]" />
    <Slot><Ic s="h-[22px] w-[22px]"><Abc /></Ic></Slot>
    <Slot><Ic><circle cx="12" cy="13" r="10.500" fill="#7ee018" stroke="#3e9a0e" /><circle cx="6" cy="3.500" r="2" fill="#c4262e" /></Ic></Slot>
    <span className="w-[141px] shrink-0" />
    <Slot><Ic><path d="M1 5h16v10H1z" fill="#ddd" stroke="#aaa" /><text x="8" y="13" fontSize="9" fill="#888" fontFamily="Liberation Sans">c</text><rect x="10" y="12" width="11" height="11" rx="1.500" fill="#888" /><path d="M13 20a3 3 0 1 1 2 1" stroke="#fff" strokeWidth="1.500" /></Ic></Slot>
    <Slot><span className="-ml-[1px]"><Ic><Abc c="#e0e0e0" o="#aaa" /><rect x="13" y="13" width="10" height="10" rx="1.500" fill="#b0b0b0" /><path d="M15.500 20.500l5-5" stroke="#fff" strokeWidth="1.700" /></Ic></span></Slot>
    <HandleV w="w-[13px]" />
    <Slot><Ic><circle cx="12" cy="12" r="7.800" stroke="#ee6a6a" strokeWidth="7" /><circle cx="12" cy="12" r="7.800" stroke="#fbc5c5" strokeWidth="7" strokeDasharray="3.500 4.670" /><circle cx="12" cy="12" r="4.500" fill="#fff" stroke="#d33" /></Ic></Slot>
    <Slot><Ic><path d="M1 3.500h22v17H3z" fill="#fff" stroke="#b5b5b5" /><text x="3" y="13.500" fontSize="8.500" fontWeight="700" fill="#444" fontFamily="DejaVu Sans Mono" textLength="18">CSW</text></Ic></Slot>
    <HandleV w="w-[15px] pl-[4px]" />
    <Slot><Ic><path d="M11.500 1c-4 0-4.500 1.500-4.500 3.500V7h5v1H4C1.500 8 1 10 1 12s.5 4.500 3 4.500h2V13c0-2 1-3 3-3h5c2 0 3-1 3-3V4.500C17 2 15 1 11.500 1z" fill="#3a72a4" /><path d="M12.500 23c4 0 4.500-1.500 4.500-3.500V17h-5v-1h8c2.500 0 3-2 3-4s-.5-4.500-3-4.500h-2V11c0 2-1 3-3 3h-5c-2 0-3 1-3 3v2.500C7 22 9 23 12.500 23z" fill="#fbd443" /><circle cx="9.300" cy="4.200" r="1" fill="#fff" /><path d="M17 16l5 3-5 3" stroke="#333" strokeWidth="1.600" /></Ic></Slot>
    <Slot><Ic><path d="M1 1h13v13H1z" fill="#d9cb17" stroke="#222" strokeWidth="1.400" /><path d="M7.500 1v13M1 7.500h13" stroke="#222" strokeWidth="1.600" /><path d="M12 11h11l1 12H11z" fill="#4a6c9a" stroke="#1d2d48" strokeWidth="1.200" /><path d="M17.500 11v12M11.500 16.500h12" stroke="#1d2d48" strokeWidth="1.400" /></Ic></Slot>
    <Slot><Ic><path d="M1 1h9l4 4v14H1z" fill="#e2f2fb" stroke="#3f93c8" /><path d="M10 6h8l5 4v13H10z" fill="#f4fbff" stroke="#3f93c8" /><circle cx="6.500" cy="11" r="1.700" fill="#e22" /><circle cx="16" cy="16.500" r="1.700" fill="#e22" /></Ic></Slot>
    <Slot><Ic><path d="M1 2l4 1 4-1 5 1 4-2 5 1-1 6 1 5-1 5 1 5-5-1-4 1-5-1-4 1-4-1 1-5-1-5 1-4z" fill="#b7e09a" stroke="#88b878" /><path d="M3 9c5 0 5 8 10 7s5-4 9-3" stroke="#e8f7dc" strokeWidth="2" /><path d="M11 13l-4 6" stroke="#444" strokeWidth="1.500" /><path d="M12 4l4-1 3 3-1 5-3 1-1 3-7-5 3-2z" fill="#f01818" stroke="#f01818" strokeWidth="1.500" strokeLinejoin="round" /></Ic></Slot>
    <Slot><Ic><rect x=".5" y=".5" width="23" height="23" fill="#bdbdbd" stroke="#333" /><text x="3.500" y="11" fontSize="9.500" fontWeight="700" fill="#111" fontFamily="DejaVu Sans Mono">svg</text><path d="M7 15l-3 2.500 3 2.500M12 15l3 2.500-3 2.500" stroke="#333" /></Ic></Slot>
    <Slot><Ic><path d="M0 0h24v24H0z" fill="#fff" /><path d="M0 0h2l10 13L22 24H0z" fill="#3aa0d8" /><path d="M12 13l12 11h-9z" fill="#a6d0e8" /><path d="M2 11l5 9 6-11" stroke="#fff" strokeWidth="2.200" /><path d="M12 11l3-6c3-3 6-1 5 4" stroke="#1d86c4" strokeWidth="2" /></Ic></Slot>
    <Slot><Ic><Info /></Ic></Slot>
  </Bar>
);

const Row3 = () => (
  <Bar h="h-[38px]">
    <HandleV w="w-[11px] pl-[5px]" />
    <Slot><Ic><path d="M13 23l2-12 1 12 2-13v13l3-10-1 10 3-7" stroke="#3d7a4a" strokeWidth="1.400" /><path d="M3 20L13 8" stroke="#e4c52a" strokeWidth="3" /><path d="M2 6c2-4 8-5 11-2l5 2-3 4-5-3-5 2z" fill="#ddd" stroke="#666" /><path d="M11 3l5-1 2 3-3 4z" fill="#b06a28" /></Ic></Slot>
    <Slot><Ic><path d="M2 2h4v3h14v16H5c-2 0-3-1-3-3z" fill="#e4e4e4" stroke="#a5a5a5" /><path d="M8 7h9v11H8z" stroke="#777" strokeDasharray="2 2" /><path d="M15 22l2-14 1 14 2-13v13l3-8" stroke="#aaa" strokeWidth="1.500" /></Ic></Slot>
    <HandleV w="w-[14px] pl-[7px]" />
    <Slot><Ic><rect x="1.200" y="1.200" width="21.600" height="21.600" rx="1" fill="#fff" stroke="#c0283e" strokeWidth="2.200" /><path d="M3 18c4 2 9 2 8-2s-5-4-3-7 6 1 8 0 1-5 5-6" stroke="#2e6cb8" strokeWidth="3" /></Ic></Slot>
    <HandleV w="w-[14px] pl-[7px]" />
    <Slot><Ic><path d="M1 2h2c7 0 10 4 10 10s-3 10-10 10H1v-4.500h2c4 0 5.500-2 5.500-5.500S7 6.500 3 6.500H1z" fill="#f68b3c" /><path d="M10 2h7c7 0 7 8 3.500 10 4 2 3.500 10-4 10h-6c2-1 3-3 3.500-4.500h2c3 0 3-4 0-4h-1v-3h1c2.500 0 2.500-4 0-4h-2C13 4 12 3 10 2z" fill="#e4572e" /></Ic></Slot>
    <Slot><Ic><Gear /></Ic></Slot>
  </Bar>
);

/* ---------- menus ---------- */
const menubar: [string, string][] = [
  ["프로젝트(J)", "w-[93px]"], ["편집(E)", "w-[66px]"], ["보기(V)", "w-[65px]"], ["레이어(L)", "w-[81px]"],
  ["설정(S)", "w-[67px]"], ["플러그인(P)", "w-[93px]"], ["벡터(o)", "w-[69px]"], ["래스터(R)", "w-[82px]"],
  ["데이터베이스(D)", "w-[127px]"], ["웹(W)", "w-[56px]"], ["공간처리(c)", "w-[95px]"], ["도움말(H)", "w-[90px]"],
];
const vectorMenu = ["Cartogram", "OpenStreetMap(O)", "조사 도구(R)", "공간 연산 도구(G)", "지오메트리 도구(G)", "분석 도구(A)", "데이터 관리 도구(D)"];

const Blob = ({ c = "#fff" }) => (
  <path d="M3 21c-3-3-1-9 4-10 3-1 1-6 6-8s10-1 10 3-3 6-6 7-2 4-4 7-7 4-10 1z" fill={c} stroke="#8a8a8a" strokeWidth="1.500" />
);
const NodeLine = ({ children }: Kids) => (
  <Ic s="h-5 w-5">
    <path d="M2 22L8 6h15" stroke="#777" strokeWidth="1.500" /><circle cx="8" cy="6" r="2.700" fill="#6fa56f" stroke="#666" />
    <rect x="13" y="13" width="10" height="10" rx="1.500" fill="#3f627e" />{children}
  </Ic>
);
const Parts = ({ a }: { a: string }) => (
  <Ic s="h-5 w-5">
    <path d="M2 6c0-4 5-5 9-4s12-1 12 3-1 8-5 7-4-3-8-2-8 1-8-4z" fill={a} stroke="#777" />
    <path d="M3 22c-2-3 0-8 4-9s6 1 5 4-5 8-9 5z" fill="#86bf86" stroke="#6a8a6a" />
  </Ic>
);
const geoMenu: [React.ReactNode, string][] = [
  [<NodeLine key="a"><path d="M15.500 18l2 3 3.500-5" stroke="#fff" strokeWidth="1.500" /></NodeLine>, "Check validity"],
  [<QLogo key="b" s="h-5 w-5" />, "지오메트리에 점추가"],
  [<Ic key="c" s="h-5 w-5"><Blob c="#ddd" /><circle cx="11" cy="10" r="2.700" fill="#6fa56f" stroke="#555" /></Ic>, "폴리곤 센트로이드"],
  [<Ic key="d" s="h-5 w-5"><Blob /></Ic>, "선을 폴리곤으로"],
  [<Ic key="e" s="h-5 w-5"><Blob /></Ic>, "폴리곤을 선으로"],
  [<Parts key="f" a="#a8a8a8" />, "멀티파트를 싱글파트로"],
  [<Ic key="g" s="h-5 w-5"><path d="M1 6l4-4 2 6 4-6 2 6 4-5 2 4 4-3M1 14c5-4 6 3 11 2s6-5 11-1M1 23h22" stroke="#aaa" strokeWidth="1.300" /></Ic>, "지오메트리 단순화"],
  [<Ic key="h" s="h-5 w-5"><g stroke="#5b84a5" strokeWidth="1.400" fill="#6fa58f"><path d="M3 6l7 14 6-14h6" fill="none" /><circle cx="3" cy="5.500" r="2" /><circle cx="15" cy="5.500" r="2" /><circle cx="21.500" cy="5.500" r="2" /><circle cx="10" cy="20" r="2" /></g></Ic>, "노드 추출"],
  [<Ic key="i" s="h-5 w-5"><path d="M1 8l7-7h9l6 8-1 7-6 7-12-7z" fill="#7b9db5" stroke="#4d6d84" /><path d="M12 10L1 8M12 10L8 1M12 10l5-9M12 10l11-1M12 10l10 6M12 10l4 13M12 10l-8 6" stroke="#4d6d84" /></Ic>, "델러니 트라이엥글"],
  [<Parts key="j" a="#86bf86" />, "싱글파트를 멀티파트로"],
  [<NodeLine key="k"><path d="M15 16h3M15 20h3M15 16v4M17 18h4M20 16l2 2-2 2" stroke="#fff" /></NodeLine>, "지오메트리 컬럼 내보내기/추가"],
  [<Ic key="l" s="h-5 w-5"><rect x=".7" y=".7" width="22.600" height="22.600" fill="#6f9ad0" stroke="#345d92" strokeWidth="1.400" /><path d="M1 8l12 4 10 11M13 12l1-11" stroke="#274c7d" strokeWidth="1.500" /><g fill="#7fb08a" stroke="#47684e"><circle cx="8.500" cy="5" r="2.300" /><circle cx="19" cy="8" r="2.300" /><circle cx="7" cy="17" r="2.300" /></g></Ic>, "Voronoi polygons"],
];
const Menus = () => (
  <>
    <div className="absolute left-[472px] top-[51px] w-[182px] border border-[#8b8b8b] bg-[#f8f8f8] shadow-[3px_3px_3px_rgba(0,0,0,0.45)]">
      {vectorMenu.map((t, i) => (
        <div key={t} className={"flex h-[21px] items-center justify-between pb-px pl-[25px] pr-[10px] leading-[18px] " + (i === 4 ? "bg-linear-to-b from-[#419cff] to-[#2c86ea] text-white" : "")}>
          <span className={"whitespace-nowrap " + (i < 2 ? "text-[15px] tracking-[-0.1px]" : "tracking-[0.5px]")}>{t}</span>
          <span className={"h-0 w-0 border-y-[4px] border-l-[4px] border-y-transparent " + (i === 4 ? "border-l-white" : "border-l-black")} />
        </div>
      ))}
    </div>
    <div className="absolute left-[652px] top-[136px] w-[262px] border border-[#8b8b8b] bg-[#f8f8f8] shadow-[3px_3px_3px_rgba(0,0,0,0.45)]">
      {geoMenu.map(([ic, t], i) => (
        <div key={t} className={"flex h-6 items-center gap-[7px] pb-px pl-[2px] " + (i === 5 ? "bg-linear-to-b from-[#419cff] to-[#2c86ea] text-white" : "")}>
          {ic}<span className={"whitespace-nowrap pb-px " + (i === 0 || i === 11 ? "text-[15px] tracking-[-0.3px]" : "tracking-[0.3px]")}>{t}</span>
        </div>
      ))}
    </div>
  </>
);

/* ---------- left side ---------- */
const leftIcons: [React.ReactNode, boolean][] = [
  [<><VNodes /><Plus /></>, false],
  [<><path d="M0 0h20v20H0z" fill="#6d95c8" /><path d="M0 0h7v7H0zM13 0h7v7h-7zM7 7h6v6H7zM0 13h7v7H0z" fill="#2a3f5e" /><path d="M7 0h6v7H7z" fill="#3f638f" /><Plus /></>, false],
  [<><path d="M1 23C3 14 10 3 22 1c1 6-4 12-14 14z" fill="#8fb2dc" stroke="#3b5a80" strokeWidth="1.200" /><path d="M1 23L18 5" stroke="#33506f" strokeWidth="1.300" /><Plus /></>, false],
  [<><path d="M2 2c4-3 13-2 16 0 2 2 2 6 0 9l-2 1v7h-4v-7l-3-1v-2l-2 2H4C1 10 0 5 2 2z" fill="#5f8cc2" stroke="#2c4a70" strokeWidth="1.300" /><path d="M6 2c-1 3 0 7 2 8M14 2c2 3 1 7-2 8" stroke="#2c4a70" /><Plus /></>, true],
  [<><ellipse cx="12" cy="11" rx="11.500" ry="10" fill="#a9c6e8" stroke="#4d7cb3" strokeWidth="1.300" /><path d="M4 6h5v4H5zM11 4h5l-2 6-3-2zM14 12h4v4h-3zM6 13h4v5z" fill="#46678e" /><Plus /></>, true],
  [<><ellipse cx="12" cy="11" rx="11.500" ry="10" fill="#6d95c8" stroke="#243b5a" strokeWidth="1.300" /><path d="M3 4h18v4H3zM3 14h18l-2 3H5z" fill="#243b5a" /><path d="M1 8.500h22M1 14h22M12 1v20M7 2c-3 5-3 13 0 18M17 2c3 5 3 13 0 18" stroke="#fff" /><Plus /></>, false],
  [<><ellipse cx="12" cy="11" rx="11.500" ry="10" fill="#eef4fb" stroke="#5b88bd" strokeWidth="1.300" /><path d="M1 11h22M12 1v20" stroke="#a9c6e8" /><path d="M6 7l6 11 4-11h4" stroke="#222" strokeWidth="1.500" /><g fill="#fff" stroke="#222"><circle cx="6" cy="6" r="1.700" /><circle cx="15" cy="6" r="1.700" /><circle cx="20" cy="6" r="1.700" /><circle cx="11.500" cy="17" r="1.700" /></g><Plus /></>, true],
  [<><path d="M4 7c0-4 4-6 8-5 5 2 4 9 1 12-2 2-4 3-6 3 3-2 4-4 3-6-4 1-6-1-6-4z" fill="#4c7db6" stroke="#2f547f" /><Plus /></>, false],
  [<><rect x="1" y="1" width="21" height="20" rx="1" fill="#adc8e6" stroke="#7a99bb" /><path d="M3 4l6 14 7-14h4" stroke="#34567c" strokeWidth="1.400" /><g fill="#fff" stroke="#34567c"><circle cx="3.500" cy="4" r="1.700" /><circle cx="15" cy="4" r="1.700" /><circle cx="20" cy="4" r="1.700" /><circle cx="9" cy="18" r="1.700" /></g><Plus /></>, false],
  [<><VNodes /><Star x={15} y={15} /></>, true],
];
const DockBtn = ({ x }: { x?: boolean }) => (
  <span className="flex h-[15px] w-[15px] shrink-0 items-center justify-center rounded-[2px] border border-[#888] bg-linear-to-b from-white to-[#e4e4e4]">
    <svg className="h-[9px] w-[9px]" viewBox="0 0 9 9" fill="none" stroke="#000" strokeWidth="1.400">
      {x ? <path d="M1 1l7 7M8 1L1 8" /> : <path d="M3 3V1h5v5H6M1 3.500h5v5H1zM1 4.500h5" />}
    </svg>
  </span>
);
const DockTitle = ({ t }: { t: string }) => (
  <div className="flex h-[22px] items-center gap-px pl-[4px] pr-px">
    <span className="min-w-0 flex-1 whitespace-nowrap pb-[2px] text-[14px] tracking-[-0.4px]">{t}</span><DockBtn /><DockBtn x />
  </div>
);
const More = () => (
  <svg className="ml-auto mr-[5px] h-2 w-2" viewBox="0 0 8 8" fill="none" stroke="#000" strokeWidth="1.500"><path d="M.5 1l3 3-3 3M4.500 1l3 3-3 3" /></svg>
);
const Btn = ({ dir, c }: { dir: "u" | "d" | "l" | "r"; c: string }) => (
  <span className={c + " flex shrink-0 items-center justify-center rounded-[2px] border border-[#888] bg-linear-to-br from-white to-[#e2e2e2]"}>
    <svg className="h-2 w-2" viewBox="0 0 8 8">
      <path d={dir === "u" ? "M0 6l4-4 4 4z" : dir === "d" ? "M0 2l4 4 4-4z" : dir === "l" ? "M6 0L2 4l4 4z" : "M2 0l4 4-4 4z"} />
    </svg>
  </span>
);
const Shape = ({ sel }: { sel?: boolean }) => (
  <svg className="h-4 w-5 shrink-0" viewBox="0 0 20 16">
    <path d="M1 3c2-2 5-2 8-.5s6 .5 9-1c2 1 1 4 .5 6s1 4 0 5-5-1.500-8-1-4 3-8 3.500c-1.500-2-.5-4 0-6S.5 5 1 3z" fill={sel ? "#b3d3f2" : "#dedede"} stroke={sel ? "#6a9fd0" : "#8a8a8a"} strokeWidth="1.200" />
  </svg>
);
const thumb = "rounded-[2px] border border-[#888] bg-linear-to-b from-white to-[#e6e6e6]";

const Left = () => (
  <div className="flex w-[155px] shrink-0">
    <div className="flex w-[55px] shrink-0 flex-col border-r-2 border-[#c6c6c6] pt-[7px]">
      <DotsH c="mx-[3px] shrink-0" />
      <div className="flex flex-col">
        {leftIcons.map(([ic, a], i) => (
          <div key={i} className="flex h-[34px] items-center pb-[2px] pl-[8px]">
            <svg className="h-6 w-6 shrink-0 overflow-visible" viewBox="0 0 24 24" fill="none">{ic}</svg>
            {a && <span className="pl-[7px] pt-[3px]"><Arr /></span>}
          </div>
        ))}
      </div>
      <DotsH c="mx-[3px] mt-[9px] shrink-0" />
    </div>
    <div className="flex w-[93px] shrink-0 flex-col pl-px">
      <DockTitle t="Bro…nel" />
      <div className="flex h-[33px] items-center pl-[7px]">
        <Ic s="h-4 w-4"><rect x="1.500" y="2" width="17" height="17" fill="#eee" stroke="#888" strokeWidth="1.500" /><circle cx="19" cy="19" r="4.500" fill="#5b9a5b" /><path d="M19 16.500v5M16.500 19h5" stroke="#fff" strokeWidth="1.300" /></Ic>
        <span className="w-[11px]" /><Ic s="h-4 w-4"><Refresh /></Ic>
        <More />
      </div>
      <div className="flex h-[215px] flex-col rounded-[2px] border border-[#b0b0b0] bg-white">
        <div className="flex h-[197px]">
          <div className="w-[74px] overflow-hidden">
            {["sk-q", "TL_S", "TL_S", "TL_S", "TL_S", "TL_S", "TL_S", "TL_S", "TL_S"].map((t, i) => (
              <div key={i} className={"flex h-[20px] items-center " + (i === 3 ? "bg-[#efefef]" : "")}>
                <span className="ml-[4px] h-full w-px shrink-0 border-l border-dotted border-[#888]" />
                <span className="mr-[2px] w-[10px] shrink-0 border-t border-dotted border-[#888]" />
                <Shape sel={i === 3} /><span className="whitespace-nowrap pl-[7px] text-[15px]">{t}</span>
              </div>
            ))}
            <div className="flex h-[17px] items-center"><Shape /><span className="whitespace-nowrap pl-[3px] text-[15px] tracking-[-0.2px]">Code_D</span></div>
          </div>
          <div className="flex w-4 flex-col bg-[#ececec]">
            <Btn dir="u" c="h-4 w-4" />
            <span className="h-[44px]" />
            <span className={thumb + " h-[26px]"} />
            <span className="flex-1" />
            <Btn dir="u" c="h-4 w-4" />
            <Btn dir="d" c="h-4 w-4" />
          </div>
        </div>
        <div className="flex h-[16px] bg-[#efefef]">
          <Btn dir="l" c="w-4" /><span className={thumb + " w-[26px]"} /><Btn dir="l" c="w-4" /><Btn dir="r" c="w-4" />
        </div>
      </div>
      <div className="flex h-[6px] items-end justify-center"><DotsH c="w-[30px]" /></div>
      <DockTitle t="Lay…nel" />
      <div className="flex h-[33px] items-center pl-[7px]">
        <Ic s="h-4 w-4"><path d="M1 12l6-5 9 9-6 5z" fill="#e8a33a" /><path d="M1 12l4 8 5 1z" fill="#cf3a2a" /><path d="M7 7l5-1 6 6-2 4z" fill="#d9d26a" /><path d="M13 11l9-9" stroke="#b87433" strokeWidth="3.500" /><path d="M3 10l3 4 2-4z" fill="#4a7ab5" /></Ic>
        <span className="w-[11px]" />
        <Ic s="h-4 w-4"><path d="M2 8h10v13H2zM6 5h11v13H6zM10 2h8v13" stroke="#777" strokeWidth="1.400" /><path d="M12 14V4" stroke="#345" strokeWidth="2" /><circle cx="19" cy="19" r="4" fill="#5b9a5b" /></Ic>
        <More />
      </div>
      <div className="flex h-[494px] flex-col rounded-[2px] border border-[#b0b0b0] bg-white">
        <div className="flex h-[17px] items-center bg-[#efefef]">
          <span className="ml-[10px] h-2 w-[10px] self-start border-b border-l border-dotted border-[#888]" />
          <span className="ml-[4px] flex h-[15px] w-[15px] items-center justify-center border border-[#bbb] bg-white">
            <svg className="h-3 w-3" viewBox="0 0 12 12"><path d="M1 1l10 10M11 1L1 11" stroke="#000" strokeWidth="2.600" /></svg>
          </span>
          <span className="ml-[7px] h-4 w-[18px] shrink-0 border border-[#2a8f8b] bg-[#1ab5ae]" />
          <span className="ml-[6px] whitespace-nowrap border-b border-black text-[15px] font-normal leading-[14px]">T⋯</span>
        </div>
        <span className="flex-1" />
        <div className="flex h-[17px] bg-[#efefef]">
          <Btn dir="l" c="w-4" />
          <span className={thumb + " flex w-[37px] items-center justify-center"}><span className="h-[12px] w-[20px] bg-[radial-gradient(circle,#c2c2c2_1px,transparent_1.2px)] bg-[length:4px_4px]" /></span>
          <span className="flex-1" /><Btn dir="l" c="w-4" /><Btn dir="r" c="w-4" />
        </div>
      </div>
    </div>
    <div className="flex flex-1 items-center justify-center"><span className={"mb-[60px] h-[270px] w-[4px] " + dotsV} /></div>
  </div>
);

/* ---------- GRASS dock ---------- */
const modules = ["새로운 GRASS 위치를 만들고 거기에 데이터 전송", "파일 관리", "영역 설정", "투영 관리", "래스터", "벡터", "이미지", "Temporal", "데이터베이스", "좌표 변환", "도움말"];
const Box = ({ minus }: { minus?: boolean }) => (
  <svg className="h-[9px] w-[13px] shrink-0" viewBox="0 0 13 9" fill="none" stroke="#8a8a8a">
    <rect x=".5" y=".5" width="8" height="8" fill="#f4f4f4" /><path d={minus ? "M2 4.500h5" : "M2 4.500h5M4.500 2v5"} /><path d="M9 4.500h4" strokeDasharray="1 1" />
  </svg>
);
const Grass = () => (
  <div className="flex min-w-0 flex-1 flex-col pr-[1px]">
    <div className="flex h-[22px] items-center gap-[9px]">
      <DotsH /><span className="whitespace-nowrap pb-[2px] text-[15px] tracking-[-0.1px]">GRASS 도구</span><DotsH />
      <span className="-ml-[5px] flex gap-px"><DockBtn /><DockBtn x /></span>
    </div>
    <p className="mt-[10px] whitespace-nowrap pl-[8px] text-[15px] leading-[17px] tracking-[0.03px]">
      No mapset is open. You can open a GRASS mapset from the browser using the<br />
      mapset item's context menu action <i>Open mapset</i>.
    </p>
    <div className="ml-[8px] mr-[8px] mt-[11px] flex h-[21px] items-end text-[#777]">
      <span className="z-10 -mb-px flex h-[22px] w-[86px] items-center justify-center rounded-t-[3px] border border-b-0 border-[#999] bg-[#efefef] pb-px text-[15px]">Modules</span>
      <span className="flex h-[18px] w-[59px] items-center justify-center border border-b-0 border-l-0 border-[#999] pb-px">영역</span>
      <span className="ml-auto flex h-[21px] w-[125px] items-center justify-center gap-[4px] rounded-[2px] border border-[#999] bg-linear-to-b from-[#f6f6f6] to-[#dcdcdc]">
        <Ic s="h-4 w-4"><rect x="1" y="1" width="22" height="22" rx="4" fill="#a5a5a5" stroke="#777" /><circle cx="12" cy="12" r="7.500" stroke="#eee" strokeWidth="2.500" /><path d="M12 7v10" stroke="#eee" strokeWidth="2.500" /></Ic>
        <span className="whitespace-nowrap pb-[2px] text-[15px] tracking-[0.2px]">Close mapset</span>
      </span>
    </div>
    <div className="mx-[8px] flex h-[718px] flex-col border-2 border-[#a2a2a2] px-[9px] pt-[9px] text-[#808080]">
      <div className="flex h-[30px] items-center">
        <span className="flex h-[29px] w-[30px] items-center justify-center rounded-[3px] border border-[#999] bg-linear-to-b from-white to-[#e8e8e8]">
          <Ic s="h-5 w-5"><rect x="1" y="2" width="22" height="20" fill="#fff" stroke="#ccc" /><path d="M1 4.500h22" stroke="#d5d5d5" strokeWidth="4" /><path d="M4 10h5v4H4zM4 16h5v4H4z" fill="#bbb" /><path d="M11 11h9M11 13h7M11 17h9M11 19h6" stroke="#ccc" /></Ic>
        </span>
        <span className="ml-[10px] w-[39px] pb-[2px] tracking-[0.2px]">필터</span>
        <span className="h-[22px] flex-1 rounded-[3px] border-2 border-[#a2a2a2]" />
      </div>
      <div className="mt-[6px] h-[662px] rounded-[2px] border-2 border-[#a2a2a2] pl-[5px] leading-none">
        <div className="flex h-[15px] items-center gap-[5px]"><Box minus /><span className="pb-[2px]">GRASS 모듈</span></div>
        <div className="flex h-[31px] items-center pl-[24px]">
          <span className="h-full border-l border-dotted border-[#999]" /><span className="w-[12px] border-t border-dotted border-[#999]" />
          <svg className="h-8 w-8 shrink-0" viewBox="0 0 32 32" fill="none">
            <rect x="2" y="2" width="27" height="26" fill="#bdbdbd" stroke="#999" strokeWidth="1.500" /><rect x="5" y="5" width="21" height="19" fill="#888" />
            <path d="M20 31l-9-12c-1-3 2-4 4-2l-1-4c1-2 3-2 4 1l2-3c2-1 3 0 3 2l3-1c2 0 2 2 1 4 3 0 3 2 2 4z" fill="#efefef" stroke="#aaa" /><path d="M20 30l-5-12M20 30l-1-15M20 30l4-14M20 30l6-10" stroke="#bbb" />
          </svg>
          <span className="ml-[7px] flex flex-col leading-[14.500px]"><span className="text-[15px]">shell</span><span>GRASS 쉘</span></span>
        </div>
        {modules.map((m, i) => (
          <div key={m} className="flex h-[15px] items-center gap-[5px] pl-[20px]"><Box /><span className={"whitespace-nowrap " + (i === 0 ? "tracking-[0.5px]" : i === 7 ? "text-[15px] tracking-[-0.6px]" : "tracking-[0.2px]")}>{m}</span></div>
        ))}
      </div>
    </div>
  </div>
);

/* ---------- status bar ---------- */
const field = "flex h-[21px] items-center rounded-[2px] border border-[#b0b0b0] bg-white";
const Spin = () => (
  <span className="ml-auto flex h-full w-[15px] flex-col items-center justify-around border-l border-[#bbb] bg-[#f2f2f2]">
    <span className="h-0 w-0 border-x-[4px] border-b-[4px] border-x-transparent border-b-black" />
    <span className="h-0 w-0 border-x-[4px] border-t-[4px] border-x-transparent border-t-black" />
  </span>
);
const Status = () => (
  <div className="flex h-[34px] shrink-0 items-center pl-[866px] text-[15px]">
    <span className="w-[33px] tracking-[0.2px]">좌표</span>
    <span className={field + " w-[265px] shrink-0 justify-center tracking-[0.2px]"}>128,889,38,695</span>
    <span className="ml-[5px] w-[33px]"><Ic s="h-[20px] w-[20px]"><path d="M3 3c3-2 6 0 6 4s3 4 5 8c1 4 0 7-3 8-3 0-4-4-6-7-3-4-5-10-2-13z" fill="#222" /><circle cx="6" cy="7" r="1.600" fill="#eee" /><path d="M9 15l2 4" stroke="#eee" strokeWidth="1.500" /><path d="M10 5c2-3 5-2 5 1s3 4 4 8-1 7-4 7" stroke="#222" strokeWidth="2.200" /><path d="M11 12L22 2M16 12l6-3" stroke="#222" strokeWidth="1.500" /></Ic></span>
    <span className="w-[34px] tracking-[0.2px]">축척</span>
    <span className={field + " w-[108px] shrink-0 pl-[4px] tracking-[0.2px]"}>1:2,218,293<span className="ml-auto flex h-full w-[16px] items-center justify-center border-l border-[#bbb] bg-[#f2f2f2]"><Arr /></span></span>
    <span className="ml-[5px] w-[34px]"><Ic s="h-[21px] w-[21px]"><path d="M7 11V7c0-6 10-6 10 0v4" stroke="#999" strokeWidth="2.200" /><rect x="4.500" y="11" width="15" height="12" rx="1" fill="#666" /></Ic></span>
    <span className="w-[62px] tracking-[-0.4px]">Magnifier</span>
    <span className={field + " w-[85px] shrink-0 pl-[3px]"}>100%<Spin /></span>
    <span className="ml-[9px] w-[39px] tracking-[0.2px]">회전</span>
    <span className={field + " w-[85px] shrink-0 pl-[3px]"}>0,0<Spin /></span>
    <span className="ml-[7px] flex h-[15px] w-[15px] items-center justify-center border border-[#bbb] bg-white"><svg className="h-3 w-3" viewBox="0 0 12 12"><path d="M1 1l10 10M11 1L1 11" stroke="#000" strokeWidth="2.600" /></svg></span>
    <span className="ml-[5px] w-[64px] tracking-[0.8px]">렌더링</span>
    <Ic s="h-[20px] w-[20px]"><circle cx="12" cy="12" r="11" fill="#8d8d8d" /><path d="M1 12h22M12 1v22M5 5c4 3 10 3 14 0M5 19c4-3 10-3 14 0" stroke="#ddd" /><ellipse cx="12" cy="12" rx="5.500" ry="11" stroke="#ddd" /></Ic>
    <span className="ml-[4px] w-[102px] tracking-[0.6px]">EPSG:4326</span>
    <Ic s="h-[21px] w-[21px]"><path d="M12 2c6 0 10 4 10 8.500S19 18 15.500 19L17 23l-6-3.500C5 19 2 15.500 2 11 2 6 6 2 12 2z" fill="#606060" /><g fill="#fff"><circle cx="7.500" cy="11" r="1.500" /><circle cx="12" cy="11" r="1.500" /><circle cx="16.500" cy="11" r="1.500" /></g></Ic>
  </div>
);

export default function App() {
  return (
    <div className="relative flex h-[1030px] w-[1920px] flex-col overflow-hidden bg-[#efefef] font-['Noto_Sans_CJK_KR',sans-serif] text-[16px] font-light leading-[20px] text-black">
      <div className="flex h-[29px] shrink-0 items-center bg-[#4b4a47]">
        <span className="ml-[3px] w-[24px]"><QLogo s="h-[20px] w-[20px]" /></span>
        <span className="font-['Open_Sans',sans-serif] text-[15px] font-normal tracking-[-0.35px] text-white">QGIS2.18.2</span>
        <svg className="ml-auto mr-[26px] h-3 w-[130px]" viewBox="0 0 130 12" fill="none" stroke="#fff">
          <path d="M1 6.500h11M60.500 3.500h8v8h-8zM62.500 3.500v-2h8v8h-2M118 1l11 11M129 1l-11 11" />
        </svg>
      </div>
      <div className="flex h-[25px] shrink-0 items-center border-b border-[#b4b4b4] pl-[5px]">
        {menubar.map(([t, w], i) => (
          <span key={t} className={w + " flex shrink-0"}>
            <span className={"flex h-[20px] items-center whitespace-nowrap border pb-px tracking-[0.2px] " + (i === 6 ? "ml-[2px] w-[62px] justify-center border-[#9a9a9a] bg-[#dcdcdc]" : "border-transparent px-[4px]")}>{t}</span>
          </span>
        ))}
      </div>
      <Row1 />
      <Row2 />
      <Row3 />
      <div className="flex h-[826px] shrink-0">
        <Left />
        <div className="mt-px h-[825px] w-[1199px] shrink-0 border-2 border-[#4a9bf0] bg-white"><MapCanvas /></div>
        <div className="flex w-[8px] shrink-0 items-center justify-center"><span className={"mb-[60px] h-[270px] w-[4px] " + dotsV} /></div>
        <Grass />
      </div>
      <Status />
      <Menus />
    </div>
  );
}
